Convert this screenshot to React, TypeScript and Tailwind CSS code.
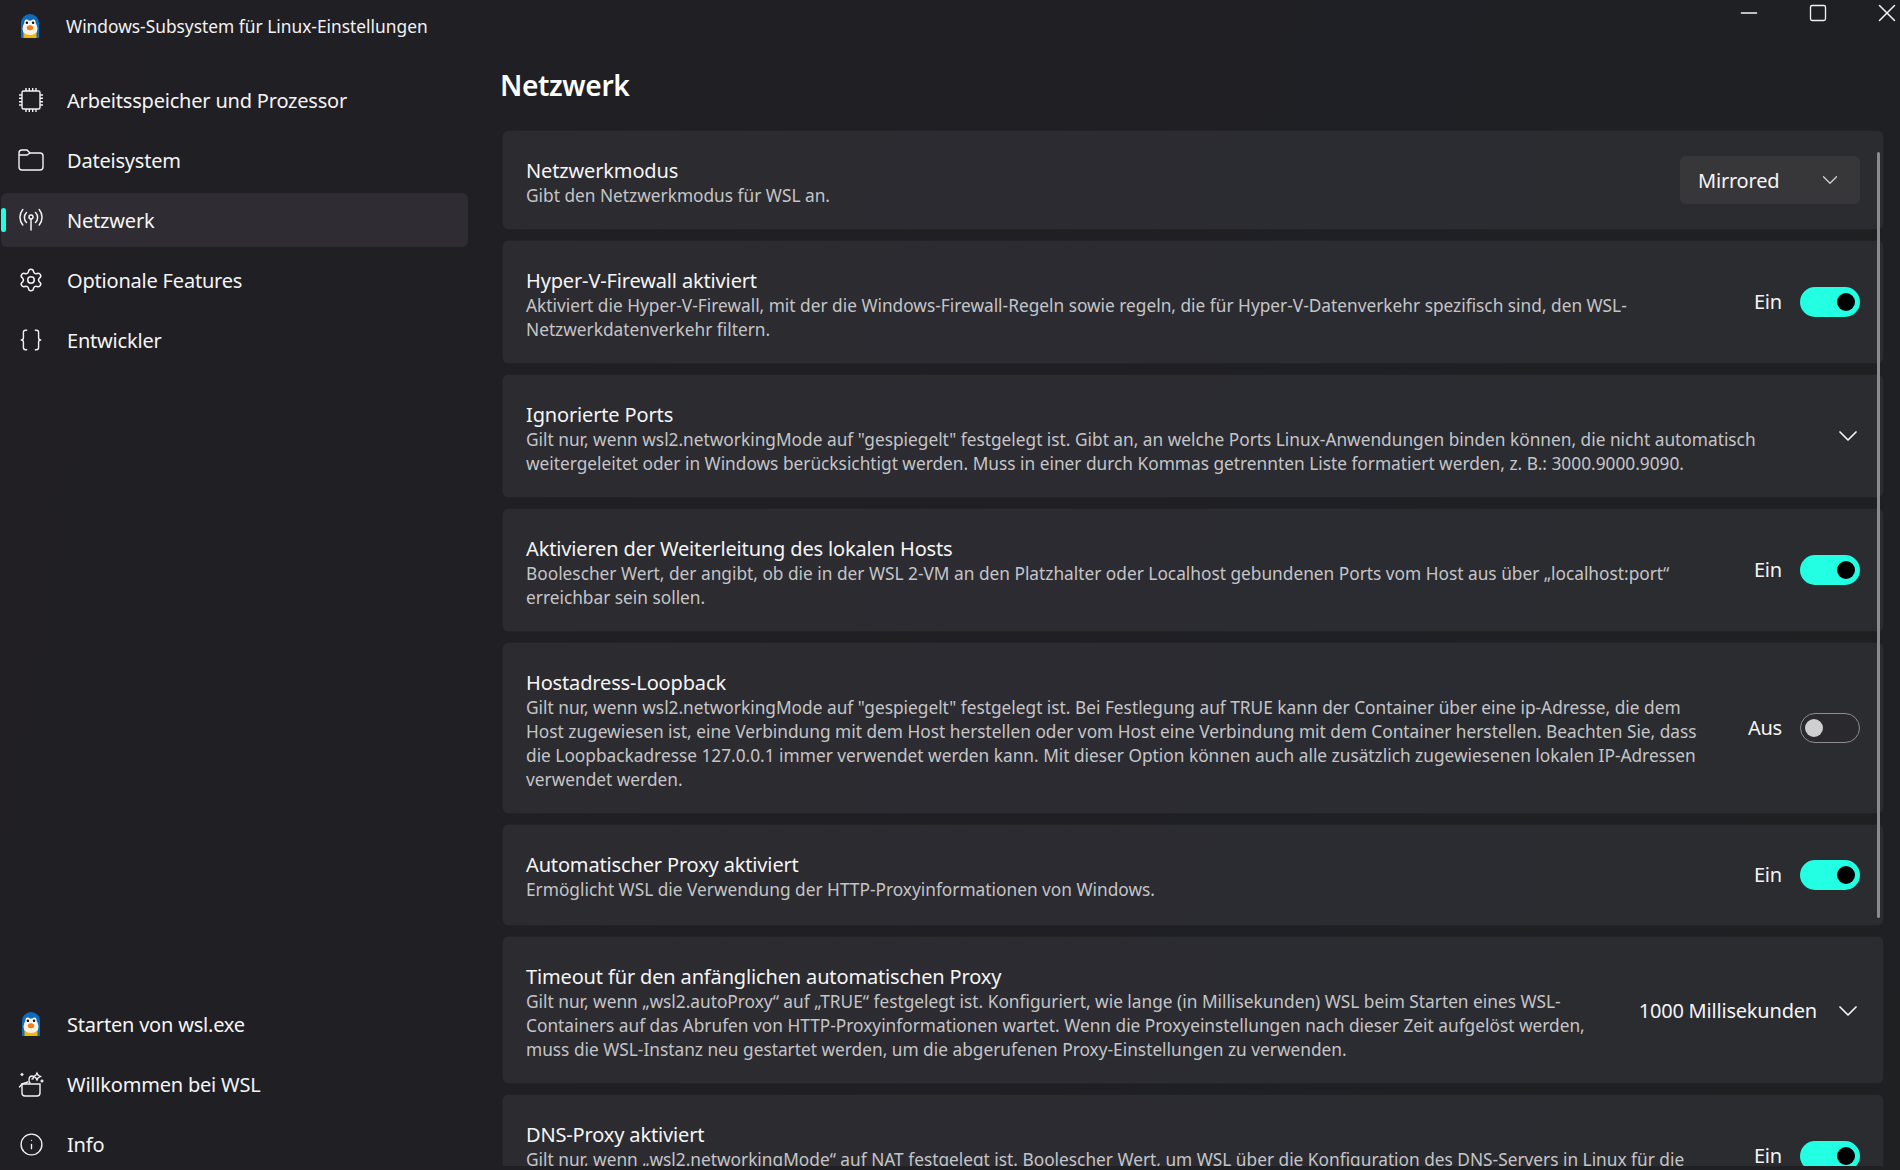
import { Braces, ChevronDown, Info, Minus, Settings, Square, X } from 'lucide-react';
import type { ReactNode } from 'react';

function Penguin() {
  return (
    <svg width="18" height="24" viewBox="0 0 18 24">
      <path d="M0 24V9a9 9 0 0 1 18 0v15z" fill="#0f6cbd" />
      <ellipse cx="9" cy="14.5" rx="7.5" ry="8" fill="#f6f1e3" />
      <path d="M2.5 18c1.5 4 11.5 4 13 0v6h-13z" fill="#f2b705" />
      <ellipse cx="5.7" cy="8.6" rx="2.3" ry="3.2" fill="#fff" />
      <ellipse cx="12.3" cy="8.6" rx="2.3" ry="3.2" fill="#fff" />
      <circle cx="5.9" cy="8.8" r="1.3" fill="#111" />
      <circle cx="12.1" cy="8.8" r="1.3" fill="#111" />
      <ellipse cx="9" cy="13.8" rx="3.2" ry="2.5" fill="#ef7d1a" />
    </svg>
  );
}

function Chip() {
  return (
    <svg width="26" height="26" viewBox="0 0 26 26" fill="none" stroke="currentColor" strokeWidth="1.4">
      <rect x="4" y="4" width="18" height="18" rx="1.5" />
      <path d="M8 1v3M11.3 1v3M14.7 1v3M18 1v3M8 22v3M11.3 22v3M14.7 22v3M18 22v3M1 8h3M1 11.3h3M1 14.7h3M1 18h3M22 8h3M22 11.3h3M22 14.7h3M22 18h3" />
    </svg>
  );
}

function Folder() {
  return (
    <svg width="26" height="24" viewBox="0 0 26 24" fill="none" stroke="currentColor" strokeWidth="1.4">
      <path d="M1 5a3 3 0 0 1 3-3h5l3 3h10a3 3 0 0 1 3 3v11a3 3 0 0 1-3 3H4a3 3 0 0 1-3-3z" />
      <path d="M1 7h8l3-2" />
    </svg>
  );
}

function Antenna() {
  return (
    <svg width="26" height="24" viewBox="0 0 26 24" fill="none" stroke="currentColor" strokeWidth="1.5" strokeLinecap="round">
      <circle cx="13" cy="9" r="2" />
      <path d="M13 11v11" />
      <path d="M8.500 4.500a7 7 0 0 0 0 10M17.500 4.500a7 7 0 0 1 0 10" />
      <path d="M4.800 1.500a12 12 0 0 0 0 15.500M21.200 1.500a12 12 0 0 1 0 15.500" />
    </svg>
  );
}

function WelcomeBox() {
  return (
    <svg width="26" height="26" viewBox="0 0 26 26" fill="none" stroke="currentColor" strokeWidth="1.4" strokeLinecap="round">
      <path d="M4 13h18v9a3 3 0 0 1-3 3H7a3 3 0 0 1-3-3z" />
      <path d="M4 13 1.500 16M4 13l6-2" />
      <path d="M12 12c-2-3-1-7 2-7 2 0 2 3 0 3" />
      <path d="M19 2l1.200 2.300L22.500 5.500l-2.300 1.200L19 9l-1.200-2.300-2.300-1.200 2.300-1.200z" />
      <path d="M3 3.500h2M4 2.500v2M24 9v2M23 10h2" />
    </svg>
  );
}

function NavItem({ icon, label, active }: { icon: ReactNode; label: string; active?: boolean }) {
  return (
    <div className={`relative ml-px flex h-[54px] w-[467px] items-center rounded-md ${active ? 'bg-[#2f2d33]' : ''}`}>
      {active && <div className="absolute left-0 top-[15px] h-[24px] w-[5px] rounded-full bg-[#22ffe2]" />}
      <div className="ml-[17px] flex w-[26px] justify-center text-[#f2f2f2]">{icon}</div>
      <span className="ml-[23px] mt-[2px] text-[20px] leading-none tracking-[-0.2px] text-[#f5f5f5]">{label}</span>
    </div>
  );
}

function Toggle({ on }: { on: boolean }) {
  return (
    <div className="flex items-center gap-[18px]">
      <span className="text-[20px] tracking-[-0.2px] text-[#f5f5f5]">{on ? 'Ein' : 'Aus'}</span>
      {on ? (
        <div className="flex h-[30px] w-[60px] items-center justify-end rounded-full bg-[#22ffe2] pr-[5px]">
          <div className="h-[18px] w-[18px] rounded-full bg-black" />
        </div>
      ) : (
        <div className="flex h-[30px] w-[60px] items-center rounded-full border border-[#8e8e90] bg-[#2a2a2e] pl-[4px]">
          <div className="h-[18px] w-[18px] rounded-full bg-[#cfcfd1]" />
        </div>
      )}
    </div>
  );
}

function Card({ title, lines, control, tall }: { title: string; lines: string[]; control: ReactNode; tall?: boolean }) {
  return (
    <div className="flex shrink-0 items-center justify-between rounded-md border border-[#232226] bg-[linear-gradient(100deg,#2c2b30,#2b2c32_60%,#2b2c2f)] pl-[23px] pr-[23px]">
      <div className={`pt-[26px] ${tall ? 'pb-[23px]' : 'pb-[21px]'}`}>
        <div className="text-[20px] leading-[27px] tracking-[-0.15px] text-[#f5f5f5]">{title}</div>
        {lines.map((l) => (
          <div key={l} className="whitespace-nowrap text-[17.3px] leading-[24px] text-[#c5c5c7]">
            {l}
          </div>
        ))}
      </div>
      {control}
    </div>
  );
}

const cards: { title: string; lines: string[]; control: ReactNode; tall?: boolean }[] = [
  {
    title: 'Netzwerkmodus',
    lines: ['Gibt den Netzwerkmodus für WSL an.'],
    control: (
      <div className="flex h-[48px] w-[180px] items-center justify-between rounded-md bg-[#37373a] pl-[18px] pr-[17px]">
        <span className="mt-[2px] text-[20px] tracking-[-0.2px] text-[#f5f5f5]">Mirrored</span>
        <ChevronDown size={26} strokeWidth={1.2} className="text-[#d0d0d0]" />
      </div>
    ),
  },
  {
    title: 'Hyper-V-Firewall aktiviert',
    lines: [
      'Aktiviert die Hyper-V-Firewall, mit der die Windows-Firewall-Regeln sowie regeln, die für Hyper-V-Datenverkehr spezifisch sind, den WSL-',
      'Netzwerkdatenverkehr filtern.',
    ],
    control: <Toggle on />,
  },
  {
    title: 'Ignorierte Ports',
    lines: [
      'Gilt nur, wenn wsl2.networkingMode auf "gespiegelt" festgelegt ist. Gibt an, an welche Ports Linux-Anwendungen binden können, die nicht automatisch',
      'weitergeleitet oder in Windows berücksichtigt werden. Muss in einer durch Kommas getrennten Liste formatiert werden, z. B.: 3000.9000.9090.',
    ],
    control: <ChevronDown size={32} strokeWidth={1.3} className="-mr-[4px] text-[#f5f5f5]" />,
  },
  {
    title: 'Aktivieren der Weiterleitung des lokalen Hosts',
    lines: [
      'Boolescher Wert, der angibt, ob die in der WSL 2-VM an den Platzhalter oder Localhost gebundenen Ports vom Host aus über „localhost:port“',
      'erreichbar sein sollen.',
    ],
    control: <Toggle on />,
  },
  {
    title: 'Hostadress-Loopback',
    lines: [
      'Gilt nur, wenn wsl2.networkingMode auf "gespiegelt" festgelegt ist. Bei Festlegung auf TRUE kann der Container über eine ip-Adresse, die dem',
      'Host zugewiesen ist, eine Verbindung mit dem Host herstellen oder vom Host eine Verbindung mit dem Container herstellen. Beachten Sie, dass',
      'die Loopbackadresse 127.0.0.1 immer verwendet werden kann. Mit dieser Option können auch alle zusätzlich zugewiesenen lokalen IP-Adressen',
      'verwendet werden.',
    ],
    control: <Toggle on={false} />,
  },
  {
    title: 'Automatischer Proxy aktiviert',
    lines: ['Ermöglicht WSL die Verwendung der HTTP-Proxyinformationen von Windows.'],
    control: <Toggle on />,
    tall: true,
  },
  {
    title: 'Timeout für den anfänglichen automatischen Proxy',
    lines: [
      'Gilt nur, wenn „wsl2.autoProxy“ auf „TRUE“ festgelegt ist. Konfiguriert, wie lange (in Millisekunden) WSL beim Starten eines WSL-',
      'Containers auf das Abrufen von HTTP-Proxyinformationen wartet. Wenn die Proxyeinstellungen nach dieser Zeit aufgelöst werden,',
      'muss die WSL-Instanz neu gestartet werden, um die abgerufenen Proxy-Einstellungen zu verwenden.',
    ],
    control: (
      <div className="mt-[2px] flex items-center gap-[15px]">
        <span className="text-[20px] tracking-[-0.2px] text-[#f5f5f5]">1000 Millisekunden</span>
        <ChevronDown size={32} strokeWidth={1.3} className="-mr-[4px] text-[#f5f5f5]" />
      </div>
    ),
  },
  {
    title: 'DNS-Proxy aktiviert',
    lines: [
      'Gilt nur, wenn „wsl2.networkingMode“ auf NAT festgelegt ist. Boolescher Wert, um WSL über die Konfiguration des DNS-Servers in Linux für die',
      'Verwendung eines DNS-Proxys auf dem Host zu konfigurieren.',
    ],
    control: <Toggle on />,
  },
];

export default function App() {
  return (
    <div className="flex h-[1170px] w-[1900px] overflow-hidden bg-[linear-gradient(100deg,#211f24,#201f24_45%,#1e2024_75%,#1e2022)] font-['Noto_Sans','Open_Sans',sans-serif]">
      {/* Sidebar */}
      <aside className="flex w-[490px] shrink-0 flex-col">
        <div className="flex h-[73px] items-start pt-[14px]">
          <div className="ml-[21px]">
            <Penguin />
          </div>
          <span className="ml-[27px] text-[17.35px] leading-[24px] text-[#f2f2f2]">Windows-Subsystem für Linux-Einstellungen</span>
        </div>
        <nav className="flex flex-col gap-[6px]">
          <NavItem icon={<Chip />} label="Arbeitsspeicher und Prozessor" />
          <NavItem icon={<Folder />} label="Dateisystem" />
          <NavItem icon={<Antenna />} label="Netzwerk" active />
          <NavItem icon={<Settings size={26} strokeWidth={1.4} />} label="Optionale Features" />
          <NavItem icon={<Braces size={26} strokeWidth={1.3} />} label="Entwickler" />
        </nav>
        <div className="mt-auto -mb-[1px] flex flex-col gap-[6px]">
          <NavItem icon={<Penguin />} label="Starten von wsl.exe" />
          <NavItem icon={<WelcomeBox />} label="Willkommen bei WSL" />
          <NavItem icon={<Info size={25} strokeWidth={1.3} />} label="Info" />
        </div>
      </aside>

      {/* Content */}
      <main className="relative flex min-w-0 flex-1 flex-col">
        <div className="flex h-[26px] items-center justify-end text-[#f2f2f2]">
          <Minus size={26} strokeWidth={1.3} className="mr-[46px]" />
          <Square size={20} strokeWidth={1.6} className="mr-[44px]" />
          <X size={30} strokeWidth={1.2} className="-mr-[2px]" />
        </div>
        <h1 className="ml-[10px] h-[104px] pt-[40px] text-[28.2px] font-semibold leading-[38px] tracking-[-0.4px] text-white">Netzwerk</h1>
        <div className="ml-[12px] mr-[16px] flex h-[1036px] flex-col gap-[10px] overflow-hidden">
          {cards.map((c) => (
            <Card key={c.title} title={c.title} lines={c.lines} control={c.control} tall={c.tall} />
          ))}
        </div>
        <div className="absolute left-[1387px] top-[152px] h-[766px] w-[3px] rounded-full bg-[#8b8b8d]" />
      </main>
    </div>
  );
}
